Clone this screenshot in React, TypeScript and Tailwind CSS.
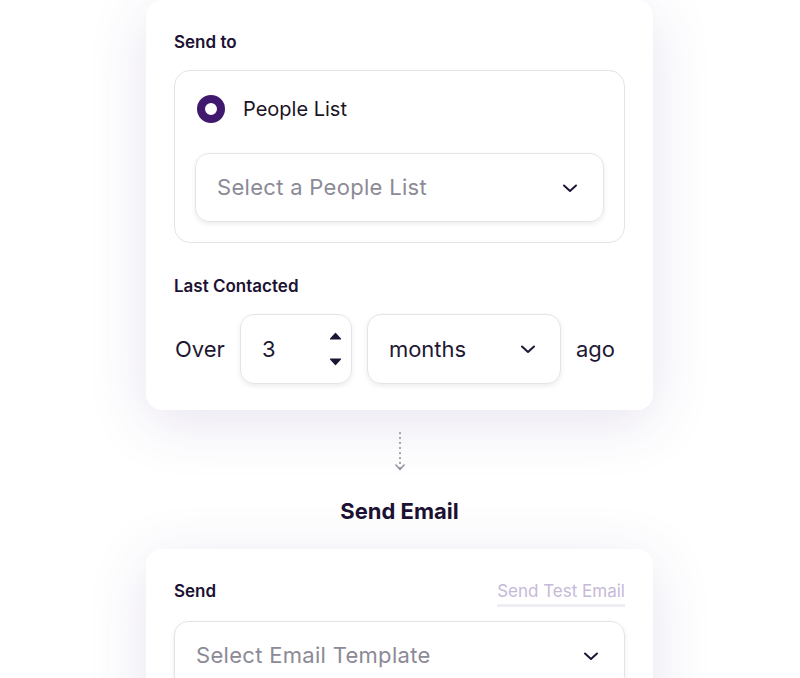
import React from "react";

const Chevron = ({ className = "" }: { className?: string }) => (
  <svg width="16" height="10" viewBox="0 0 16 10" className={className} fill="none">
    <path d="M2 2.5 L8 8 L14 2.5" stroke="#1e1535" strokeWidth="2" strokeLinecap="round" strokeLinejoin="round" />
  </svg>
);

const font = { fontFamily: "Inter, 'Noto Sans', sans-serif" };

export default function App() {
  return (
    <div className="w-[800px] h-[678px] overflow-hidden bg-white pl-[146px]" style={font}>
      <div className="w-[507px] flex flex-col items-center">
        {/* Card 1 */}
        <div className="w-[507px] bg-white rounded-2xl shadow-[0_12px_60px_rgba(70,40,130,0.13)] px-[28px] pt-[31px] pb-[26px] flex flex-col">
          <div className="text-[17px] leading-[22px] font-semibold text-[#1d1233]">Send to</div>
          <div className="mt-[17px] border border-[#e4e3e8] rounded-[16px] px-[20px] pt-[24px] pb-[20px] flex flex-col">
            <div className="flex items-center gap-[18px] ml-[2px]">
              <div className="w-[28px] h-[28px] rounded-full border-[8px] border-[#40186e]" />
              <span className="text-[20px] leading-[28px] text-[#1a1424]">People List</span>
            </div>
            <div className="mt-[30px] h-[69px] rounded-[14px] border border-[#e4e3e8] shadow-[0_2px_5px_rgba(0,0,0,0.08)] flex items-center justify-between pl-[21px] pr-[25px]">
              <span className="text-[22px] tracking-[0.3px] text-[#8c8a96]">Select a People List</span>
              <Chevron />
            </div>
          </div>
          <div className="mt-[32px] text-[17px] leading-[22px] font-semibold text-[#1d1233]">Last Contacted</div>
          <div className="mt-[17px] flex items-center">
            <span className="text-[22px] text-[#1e1833] ml-[1px]">Over</span>
            <div className="ml-[15px] w-[112px] h-[70px] rounded-[14px] border border-[#e4e3e8] shadow-[0_2px_5px_rgba(0,0,0,0.08)] flex items-center justify-between pl-[21px] pr-[9px]">
              <span className="text-[22px] text-[#1e1833]">3</span>
              <div className="flex flex-col items-center gap-[18px]">
                <svg width="13" height="8" viewBox="0 0 13 8"><path d="M1.5 7 L6.5 1.5 L11.5 7 Z" fill="#1e1535" stroke="#1e1535" strokeWidth="1.2" strokeLinejoin="round" /></svg>
                <svg width="13" height="8" viewBox="0 0 13 8"><path d="M1.5 1 L6.5 6.5 L11.5 1 Z" fill="#1e1535" stroke="#1e1535" strokeWidth="1.2" strokeLinejoin="round" /></svg>
              </div>
            </div>
            <div className="ml-[15px] w-[194px] h-[70px] rounded-[14px] border border-[#e4e3e8] shadow-[0_2px_5px_rgba(0,0,0,0.08)] flex items-center justify-between pl-[21px] pr-[24px]">
              <span className="text-[22px] text-[#1e1833]">months</span>
              <Chevron />
            </div>
            <span className="ml-[15px] text-[22px] text-[#1e1833]">ago</span>
          </div>
        </div>

        {/* Connector */}
        <div className="mt-[21px] flex flex-col items-center">
          <svg width="12" height="42" viewBox="0 0 12 42" fill="none">
            <line x1="6" y1="1" x2="6" y2="38" stroke="#8f8a9c" strokeWidth="1.5" strokeDasharray="2 3" />
            <path d="M1.5 33.5 L6 38.5 L10.5 33.5" stroke="#8f8a9c" strokeWidth="1.3" fill="none" />
          </svg>
        </div>
        <div className="mt-[23px] text-[22px] leading-[30px] font-bold text-[#1d1233]">Send Email</div>

        {/* Card 2 */}
        <div className="mt-[23px] w-[507px] bg-white rounded-2xl shadow-[0_12px_60px_rgba(70,40,130,0.13)] px-[28px] pt-[31px] pb-[40px] flex flex-col">
          <div className="flex items-start justify-between">
            <div className="text-[17px] leading-[22px] font-semibold text-[#1d1233]">Send</div>
            <div className="flex flex-col">
              <span className="text-[17px] leading-[22px] text-[#c5b9d8]">Send Test Email</span>
              <div className="mt-[2px] h-[3px] bg-[#efeef5]" />
            </div>
          </div>
          <div className="mt-[14px] h-[69px] rounded-[14px] border border-[#e4e3e8] shadow-[0_2px_5px_rgba(0,0,0,0.08)] flex items-center justify-between pl-[21px] pr-[25px]">
            <span className="text-[22px] tracking-[0.3px] text-[#8c8a96]">Select Email Template</span>
            <Chevron />
          </div>
        </div>
      </div>
    </div>
  );
}
